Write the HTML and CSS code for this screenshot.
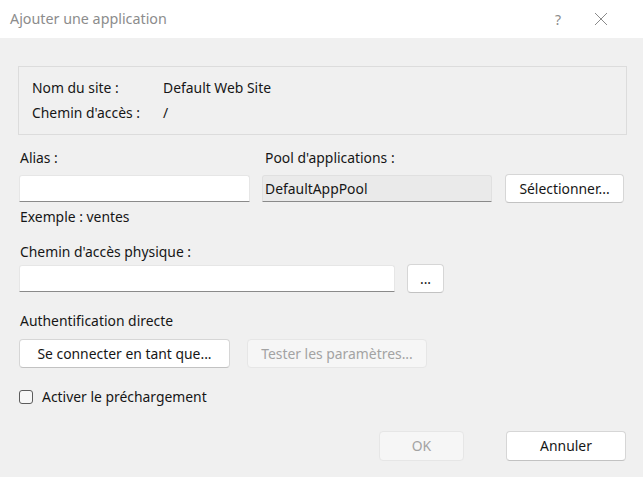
FILE: index.html
```html
<!DOCTYPE html>
<html lang="fr">
<head>
<meta charset="utf-8">
<title>Ajouter une application</title>
<link rel="stylesheet" href="styles.css">
</head>
<body>
<div class="window">
  <header class="titlebar">
    <span class="title">Ajouter une application</span>
    <div class="tb-buttons">
      <span class="tb-help">?</span>
      <svg class="tb-close" width="14" height="14" viewBox="0 0 14 14"><path d="M1 1L13 13M13 1L1 13" stroke="#8a8a8a" stroke-width="1" fill="none"/></svg>
    </div>
  </header>
  <main class="content">
    <section class="group">
      <div class="info-row"><span class="key">Nom du site :</span><span>Default Web Site</span></div>
      <div class="info-row second"><span class="key">Chemin d'accès :</span><span>/</span></div>
    </section>

    <div class="two-col">
      <div class="col alias-col">
        <div class="label">Alias :</div>
        <div class="ctrl-row"><div class="input alias-input"></div></div>
        <div class="hint">Exemple : ventes</div>
      </div>
      <div class="col pool-col">
        <div class="label pool-label">Pool d'applications :</div>
        <div class="ctrl-row">
          <div class="field readonly">DefaultAppPool</div>
          <button class="btn select-btn">Sélectionner...</button>
        </div>
      </div>
    </div>

    <div class="label path-label">Chemin d'accès physique :</div>
    <div class="ctrl-row path-row">
      <div class="input path-input"></div>
      <button class="btn browse-btn">...</button>
    </div>

    <div class="label auth-label">Authentification directe</div>
    <div class="btn-row">
      <button class="btn connect-btn">Se connecter en tant que...</button>
      <button class="btn disabled test-btn">Tester les paramètres...</button>
    </div>

    <label class="check-row"><span class="checkbox"></span><span>Activer le préchargement</span></label>
  </main>
  <footer class="footer">
    <button class="btn disabled ok-btn">OK</button>
    <button class="btn cancel-btn">Annuler</button>
  </footer>
</div>
</body>
</html>
```
FILE: styles.css
```css
* { box-sizing: border-box; }
html, body { margin: 0; padding: 0; }
body {
  width: 643px;
  height: 477px;
  background: #f0f0f0;
  font-family: "Noto Sans", "Open Sans", sans-serif;
  font-size: 13.9px;
  color: #161616;
  overflow: hidden;
}
.window {
  width: 643px;
  height: 477px;
  background: #f0f0f0;
  display: flex;
  flex-direction: column;
}
.titlebar {
  height: 38px;
  background: #ffffff;
  display: flex;
  align-items: center;
  justify-content: space-between;
  padding-left: 10px;
}
.title {
  font-size: 14.3px;
  color: #8c8c8c;
  line-height: 20px;
}
.tb-buttons {
  display: flex;
  align-items: center;
  height: 100%;
}
.tb-help {
  color: #8c8c8c;
  font-size: 14px;
  width: 30px;
  text-align: center;
  margin-right: 21px;
}
.tb-close { margin-right: 35px; }

.content {
  padding: 28px 16px 0 19px;
  display: flex;
  flex-direction: column;
  align-items: flex-start;
}
.group {
  margin-left: -1px;
  width: 609px;
  border: 1px solid #dcdcdc;
  padding: 11px 13px;
}
.info-row {
  display: flex;
  line-height: 20px;
  height: 20px;
}
.info-row.second { margin-top: 5px; }
.key { width: 131px; }

.label { line-height: 20px; height: 20px; padding-left: 1px; }
.two-col {
  display: flex;
  margin-top: 13px;
}
.col { display: flex; flex-direction: column; }
.alias-col { width: 231px; }
.pool-col { margin-left: 12px; }
.pool-label { padding-left: 3px; }
.ctrl-row {
  display: flex;
  align-items: center;
  height: 29px;
  margin-top: 6px;
}
.input {
  height: 27px;
  background: #ffffff;
  border: 1px solid #e6e6e6;
  border-bottom: 1px solid #8a8a8a;
  border-radius: 3px 3px 0 0;
}
.alias-input { width: 231px; }
.field.readonly {
  width: 230px;
  height: 27px;
  background: #eaeaea;
  border: 1px solid #e0e0e0;
  border-bottom: 1px solid #8a8a8a;
  border-radius: 3px 3px 0 0;
  line-height: 25px;
  padding-left: 2px;
}
.hint { line-height: 20px; margin-top: 4px; padding-left: 1px; }

.btn {
  font-family: inherit;
  font-size: 13.9px;
  color: #161616;
  height: 29px;
  background: #ffffff;
  border: 1px solid #d6d6d6;
  border-bottom-color: #c2c2c2;
  border-radius: 4px;
  padding: 0;
  line-height: 27px;
  white-space: nowrap;
}
.btn.disabled {
  background: #f6f6f6;
  border-color: #e6e6e6;
  color: #a3a3a3;
}
.select-btn { width: 119px; margin-left: 13px; }

.path-label { margin-top: 15px; }
.path-row { margin-top: 2px; }
.path-input { width: 376px; }
.browse-btn { width: 37px; margin-left: 12px; }

.auth-label { margin-top: 18px; }
.btn-row { display: flex; margin-top: 8px; }
.connect-btn { width: 211px; }
.test-btn { width: 180px; margin-left: 17px; }

.check-row {
  display: flex;
  align-items: center;
  margin-top: 19px;
  line-height: 20px;
}
.checkbox {
  width: 14px;
  height: 14px;
  border: 1px solid #5c5c5c;
  border-radius: 3px;
  background: #f7f7f7;
  margin-right: 9px;
}

.footer {
  display: flex;
  justify-content: flex-end;
  padding: 24px 17px 0 0;
}
.footer .btn { height: 30px; line-height: 28px; }
.ok-btn { width: 85px; }
.cancel-btn { width: 120px; margin-left: 42px; }
```
